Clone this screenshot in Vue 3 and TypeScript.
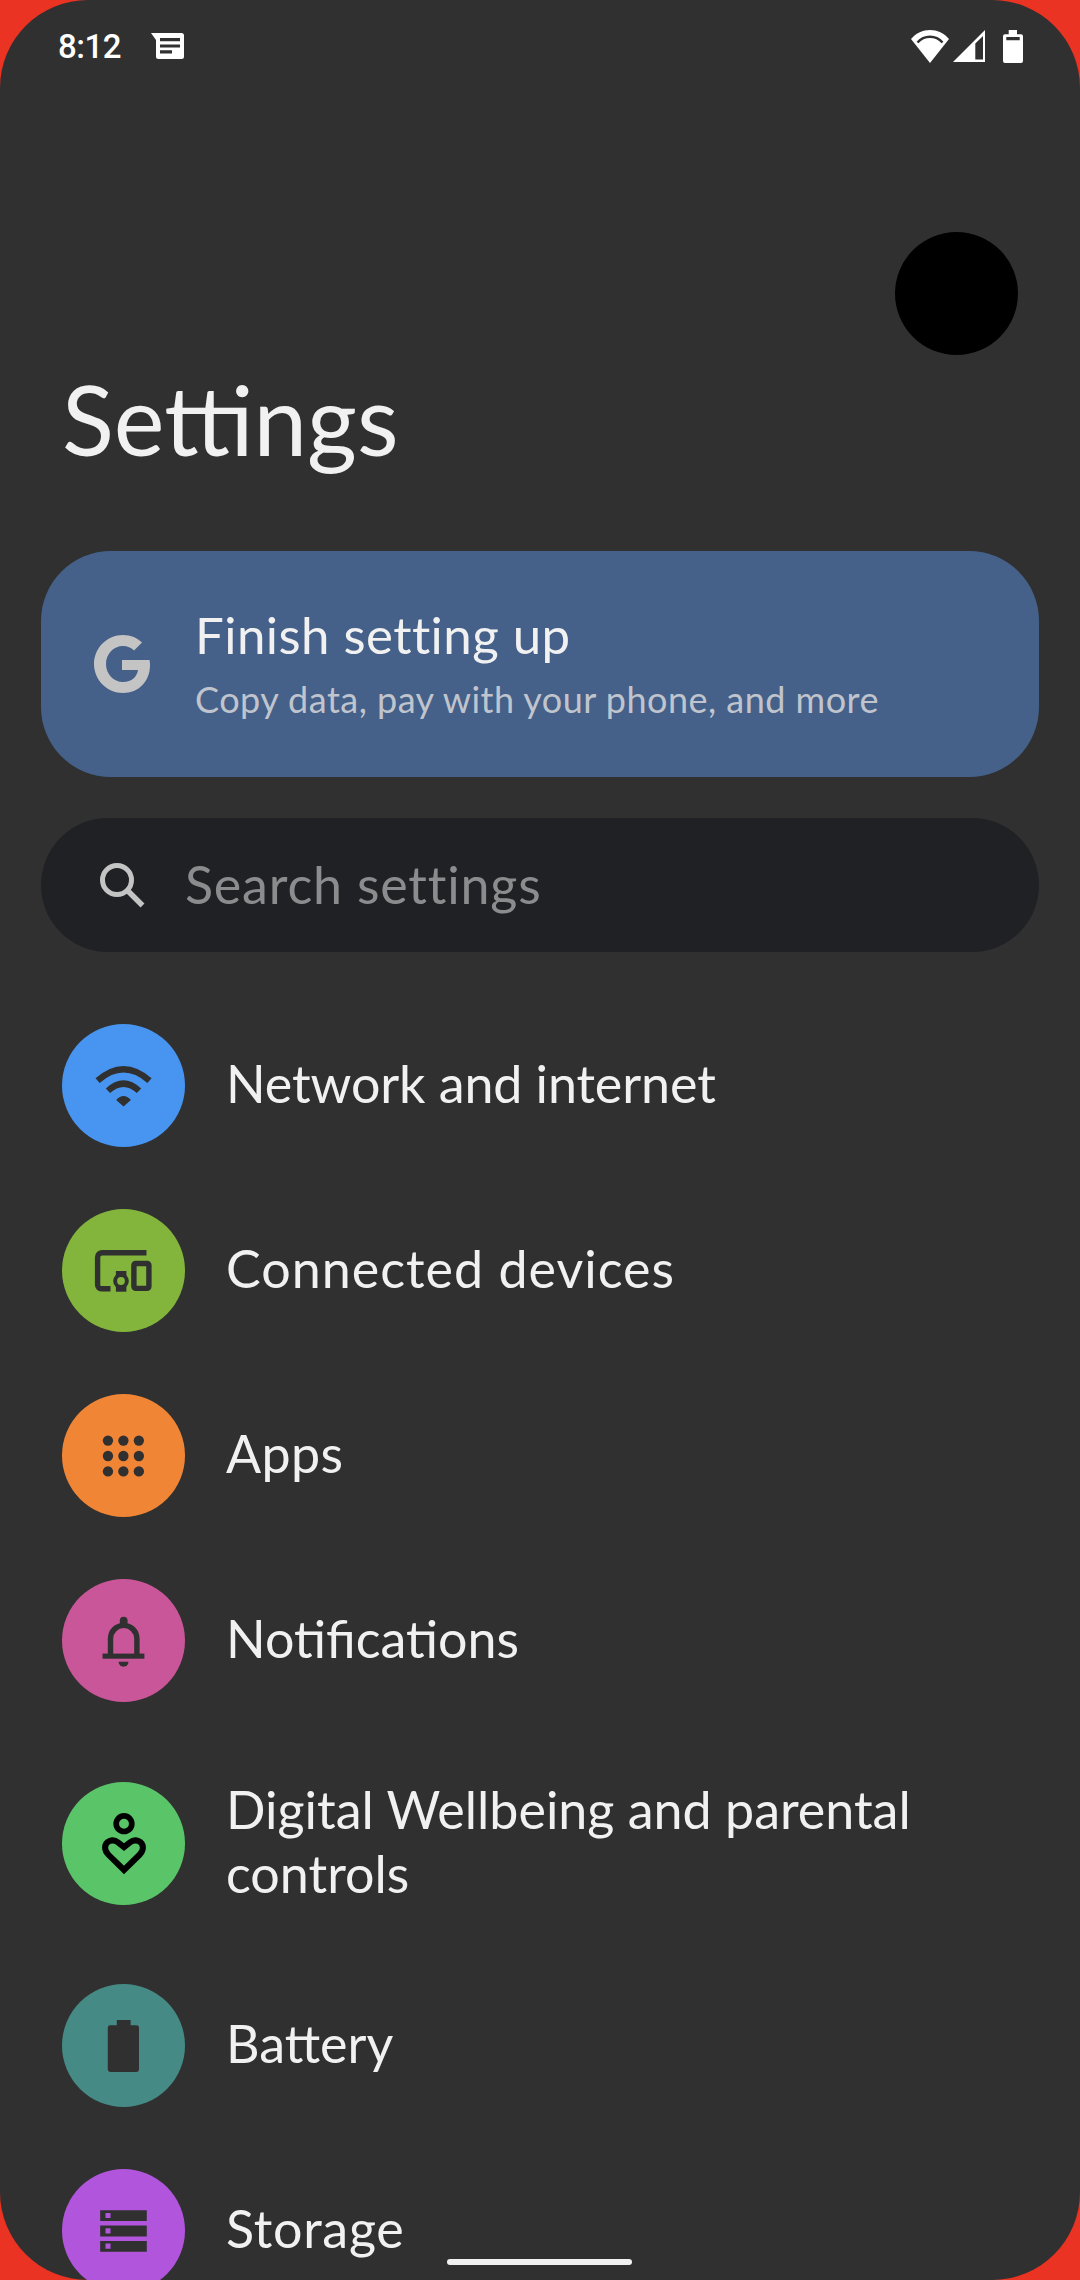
<script setup lang="ts">
interface Row {
  label: string
  color: string
  tall?: boolean
  tracking?: string
  icon: string
}
const rows: Row[] = [
  { label: 'Network and internet', color: '#4795f0', tracking: '-0.1px', icon: 'wifi' },
  { label: 'Connected devices', color: '#83b53c', tracking: '1px', icon: 'devices' },
  { label: 'Apps', color: '#f08536', tracking: '0.4px', icon: 'apps' },
  { label: 'Notifications', color: '#c95699', icon: 'bell' },
  { label: 'Digital Wellbeing and parental controls', color: '#5ac568', icon: 'well', tall: true },
  { label: 'Battery', color: '#458a84', icon: 'battery' },
  { label: 'Storage', color: '#b255dd', tracking: '0.7px', icon: 'storage' },
]
const dots = [0, 1, 2].flatMap((r) => [0, 1, 2].map((c) => ({ x: 6.65 + c * 5.15, y: 6.85 + r * 5.15 })))
</script>

<template>
  <div class="screen">
    <div class="status">
      <span class="time">8:12</span>
      <svg class="msg" viewBox="0 0 33 26" width="33" height="26">
        <path fill="#fff" fill-rule="evenodd" d="M0 0 H30.500 a2.500 2.500 0 0 1 2.500 2.500 V23.500 a2.500 2.500 0 0 1 -2.500 2.500 H7.500 a2.500 2.500 0 0 1 -2.500 -2.500 V7 Z M9 5 V8.300 H29 V5 Z M9 11.500 V14.500 H29 V11.500 Z M9 17.300 V20.500 H21 V17.300 Z" />
      </svg>
      <span class="spacer"></span>
      <svg class="wifi" viewBox="0 0 38 33" width="38" height="33">
        <path fill="#fff" d="M19 0 C26 0 33 3 38 9 L19 33 L0 9 C5 3 12 0 19 0 Z" />
        <path fill="none" stroke="#303030" stroke-width="2.500" d="M6.500 12.500 C10 8.500 14 6.800 19 6.800 C24 6.800 28 8.500 31.500 12.500" />
      </svg>
      <svg class="signal" viewBox="0 0 32 32" width="32" height="32">
        <path fill="#fff" fill-rule="evenodd" d="M32 0 V32 H0 Z M22.300 13.500 V29.500 H30 V6 Z" />
      </svg>
      <svg class="batt" viewBox="0 0 20 33" width="20" height="33">
        <path fill="#fff" fill-rule="evenodd" d="M5.700 0 H14 V4.300 H18 a2 2 0 0 1 2 2 V31 a2 2 0 0 1 -2 2 H2 a2 2 0 0 1 -2 -2 V6.300 a2 2 0 0 1 2 -2 H5.700 Z M3.300 7 V10.300 H16.700 V7 Z" />
      </svg>
    </div>

    <div class="hero">
      <div class="camera"></div>
      <h1 class="title">Settings</h1>
    </div>

    <div class="setup">
      <svg class="g" viewBox="0 0 56 58" width="56" height="58">
        <path fill="#c4c4c4" d="M29 0 C37 0 43.500 3 48 7.500 L40 15.500 C37 12.600 33.500 11 29 11 C19.500 11 12 19 12 29 C12 39 19.500 47 29 47 C38 47 43 41.500 44 35 H28 V25 H55.500 C56 27 56 28.500 56 30.500 C56 46 45 58 29 58 C13 58 0 45 0 29 C0 13 13 0 29 0 Z" />
      </svg>
      <div class="setup-text">
        <div class="setup-title">Finish setting up</div>
        <div class="setup-sub">Copy data, pay with your phone, and more</div>
      </div>
    </div>

    <div class="search">
      <svg class="mag" viewBox="0 0 46 46" width="46" height="46">
        <circle cx="18" cy="18" r="14.500" fill="none" stroke="#c4c4c4" stroke-width="5" />
        <path d="M28.500 28.500 L43.500 43.500" stroke="#c4c4c4" stroke-width="5.500" />
      </svg>
      <span class="search-text">Search settings</span>
    </div>

    <ul class="list">
      <li v-for="row in rows" :key="row.label" class="row" :class="{ tall: row.tall }">
        <span class="badge" :style="{ background: row.color }">
          <svg viewBox="0 0 24 24" width="72" height="72" class="ico">
            <template v-if="row.icon === 'wifi'">
              <path fill="#303030" d="M9.400 16.700 Q11.850 13.900 14.300 16.700 L11.850 18.800 Z" />
              <path fill="none" stroke="#303030" stroke-width="2.100" d="M3.200 10.200 Q11.850 2.600 20.500 10.200 M6.650 13.600 Q11.850 8.800 17 13.600" />
            </template>
            <template v-else-if="row.icon === 'devices'">
              <path fill="none" stroke="#303030" stroke-width="1.800" d="M19.500 5.900 H4.700 A1.500 1.500 0 0 0 3.200 7.400 V16.700 A1.200 1.200 0 0 0 4.400 17.900 H7.500" />
              <rect x="15.300" y="9.500" width="5" height="8.300" rx="0.600" fill="none" stroke="#303030" stroke-width="1.800" />
              <path fill="#303030" d="M9.300 12 H12.800 V18.900 H9.300 Z" />
              <circle cx="11" cy="15.330" r="2.600" fill="#303030" />
              <circle cx="11" cy="15.330" r="1.300" fill="#83b53c" />
            </template>
            <template v-else-if="row.icon === 'apps'">
              <circle v-for="(d, i) in dots" :key="i" :cx="d.x" :cy="d.y" r="1.720" fill="#303030" />
            </template>
            <template v-else-if="row.icon === 'bell'">
              <path fill="none" stroke="#303030" stroke-width="1.800" d="M7.500 17 V11.200 A4.400 4.400 0 0 1 16.300 11.200 V17" />
              <rect x="10.600" y="3.900" width="2.600" height="3" rx="1.300" fill="#303030" />
              <rect x="4.850" y="16.200" width="13.950" height="1.700" fill="#303030" />
              <path fill="#303030" d="M10.200 18.900 H13.500 A1.650 1.700 0 0 1 10.200 18.900 Z" />
            </template>
            <template v-else-if="row.icon === 'well'">
              <circle cx="12" cy="5.560" r="2.600" fill="none" stroke="#000" stroke-width="1.900" />
              <path fill="none" stroke="#000" stroke-width="2" d="M12 13.400 L10 11.800 C8.200 10.400 5.700 11.400 5.700 13.600 C5.700 14.600 6.200 15.300 6.900 16 L12 21 L17.100 16 C17.800 15.300 18.300 14.600 18.300 13.600 C18.300 11.400 15.800 10.400 14 11.800 Z" />
            </template>
            <template v-else-if="row.icon === 'battery'">
              <path fill="#303030" d="M9.600 3.330 H14.200 V5.100 H16.200 A0.800 0.800 0 0 1 17 5.900 V19.870 A0.800 0.800 0 0 1 16.200 20.670 H7.400 A0.800 0.800 0 0 1 6.600 19.870 V5.900 A0.800 0.800 0 0 1 7.400 5.100 H9.600 Z" />
            </template>
            <template v-else>
              <path fill="#303030" fill-rule="evenodd" d="M4.060 5.100 H19.600 V8.670 H4.060 Z M5.830 6 V7.670 H7.500 V6 Z M4.060 10.200 H19.600 V13.800 H4.060 Z M5.830 11.100 V12.800 H7.500 V11.100 Z M4.060 15.300 H19.600 V18.900 H4.060 Z M5.830 16.200 V17.900 H7.500 V16.200 Z" />
            </template>
          </svg>
        </span>
        <span class="label" :style="{ letterSpacing: row.tracking }">{{ row.label }}</span>
      </li>
    </ul>

    <div class="home"></div>
  </div>
</template>

<style>
html, body { margin: 0; background: #ea3323; }
</style>

<style scoped>
.screen {
  position: relative;
  width: 1080px;
  height: 2280px;
  overflow: hidden;
  background: #303030;
  border-radius: 88px;
  font-family: Lato, "Noto Sans", sans-serif;
  color: #f1f1f1;
  box-sizing: border-box;
}
.status {
  display: flex;
  align-items: center;
  height: 92px;
  padding: 0 57px 0 58px;
  box-sizing: border-box;
}
.time {
  font-family: Roboto, sans-serif;
  font-size: 33px;
  font-weight: 500;
  letter-spacing: -0.5px;
  color: #fff;
  width: 93px;
}
.spacer { flex: 1; }
.signal { margin-left: 4px; }
.batt { margin-left: 18px; }
.hero {
  position: relative;
  height: 459px;
  padding-left: 62px;
  box-sizing: border-box;
}
.camera {
  position: absolute;
  left: 895px;
  top: 140px;
  width: 123px;
  height: 123px;
  border-radius: 50%;
  background: #000;
}
.title {
  margin: 0;
  padding-top: 272px;
  font-size: 96px;
  line-height: 110px;
  font-weight: 400;
}
.setup {
  display: flex;
  align-items: center;
  margin: 0 41px;
  height: 226px;
  border-radius: 70px;
  background: #456089;
  padding-left: 53px;
  box-sizing: border-box;
}
.setup-text { margin-left: 45px; }
.setup-title { font-size: 51px; line-height: 60px; letter-spacing: 0.45px; margin-top: -2px; }
.setup-sub { font-size: 36px; line-height: 44px; margin-top: 12px; letter-spacing: 0.48px; color: #c0c5cd; }
.search {
  display: flex;
  align-items: center;
  margin: 41px 41px 0;
  height: 134px;
  border-radius: 67px;
  background: #202124;
  padding-left: 58px;
  box-sizing: border-box;
}
.search-text { margin: 0 0 3px 40px; font-size: 52px; letter-spacing: 0.8px; color: #8b8c8e; }
.list {
  list-style: none;
  margin: 41px 0 0;
  padding: 0;
}
.row {
  display: flex;
  align-items: center;
  height: 185px;
  padding: 0 62px;
  box-sizing: border-box;
}
.row.tall { height: 220px; }
.badge {
  flex: none;
  display: flex;
  align-items: center;
  justify-content: center;
  width: 123px;
  height: 123px;
  border-radius: 50%;
}
.label {
  margin: 0 0 5px 41px;
  font-size: 52px;
  line-height: 64px;
}
.home {
  position: absolute;
  left: 447px;
  top: 2259px;
  width: 185px;
  height: 6px;
  border-radius: 3px;
  background: #f1f1f1;
}
</style>
